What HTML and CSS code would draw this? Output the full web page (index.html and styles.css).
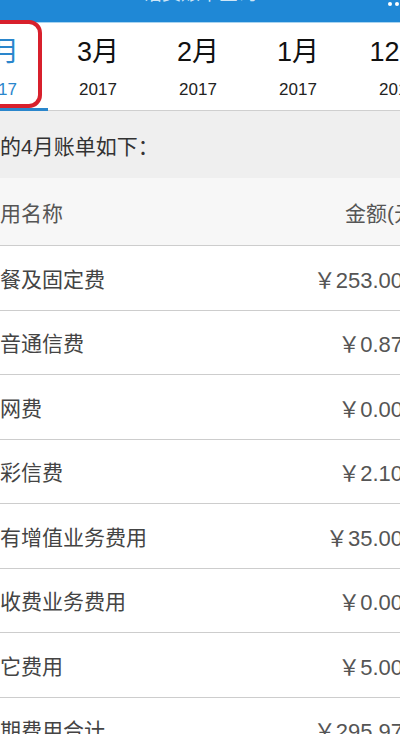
FILE: index.html
```html
<!DOCTYPE html>
<html lang="zh-CN">
<head>
    <meta charset="UTF-8">
    <meta name="viewport" content="width=device-width, initial-scale=1.0">
    <title>话费账单</title>
    <link rel="stylesheet" href="styles.css">
</head>
<body>
    <div class="screen">
        <div class="nav">
            <span class="nav-title">话费账单查询</span>
            <span class="nav-more"><i></i><i></i><i></i></span>
        </div>

        <div class="tabs">
            <div class="tab active"><span class="month">4月</span><span class="year">2017</span></div>
            <div class="tab"><span class="month">3月</span><span class="year">2017</span></div>
            <div class="tab"><span class="month">2月</span><span class="year">2017</span></div>
            <div class="tab"><span class="month">1月</span><span class="year">2017</span></div>
            <div class="tab"><span class="month">12月</span><span class="year">2016</span></div>
        </div>
        <div class="mark"></div>

        <div class="intro">您的4月账单如下：</div>

        <div class="bill">
            <div class="row head"><span>费用名称</span><span class="unit">金额(元)</span></div>
            <div class="row"><span>套餐及固定费</span><span class="amount">￥253.00</span></div>
            <div class="row"><span>语音通信费</span><span class="amount">￥0.87</span></div>
            <div class="row"><span>上网费</span><span class="amount">￥0.00</span></div>
            <div class="row"><span>短彩信费</span><span class="amount">￥2.10</span></div>
            <div class="row"><span>所有增值业务费用</span><span class="amount">￥35.00</span></div>
            <div class="row"><span>代收费业务费用</span><span class="amount">￥0.00</span></div>
            <div class="row"><span>其它费用</span><span class="amount">￥5.00</span></div>
            <div class="row"><span>本期费用合计</span><span class="amount">￥295.97</span></div>
        </div>
    </div>
</body>
</html>
```

FILE: styles.css
```css
* { margin: 0; padding: 0; box-sizing: border-box; }
body { font-family: "Liberation Sans", "Noto Sans CJK SC", sans-serif; background: #fff; }
.screen { position: relative; width: 400px; height: 734px; overflow: hidden; background: #fff; }

.nav { height: 23px; background: #1f88d6; border-bottom: 1px solid #a9d4f0; display: flex; justify-content: center; position: relative; }
.nav-title { color: #cfe6f7; font-size: 19px; line-height: 20px; margin-top: -16px; }
.nav-more { position: absolute; right: -6px; top: 2px; display: flex; gap: 3px; }
.nav-more i { display: block; width: 4px; height: 4px; border-radius: 50%; background: #fff; }

.tabs { display: flex; margin-left: -52px; height: 88px; border-bottom: 1px solid #cfcfcf; }
.tab { flex: 0 0 100px; display: flex; flex-direction: column; align-items: center; position: relative; }
.tab .month { font-size: 27px; line-height: 30px; margin-top: 14px; color: #111; }
.tab .year { font-size: 17px; line-height: 20px; margin-top: 13px; color: #222; }
.tab.active .month, .tab.active .year { color: #2a86cc; }
.tab.active::after { content: ""; position: absolute; left: 0; right: 0; bottom: -1px; height: 3px; background: #2a86cc; }

.mark { position: absolute; left: -20px; top: 20px; width: 62px; height: 88px; border: 4.5px solid #d8202c; border-radius: 13px; }

.intro { height: 67px; background: #efefef; display: flex; align-items: center; margin-left: -21px; font-size: 21px; color: #333; }

.bill { margin: 0 -3px 0 -21px; }
.row { height: 64.5px; display: flex; justify-content: space-between; align-items: center; border-bottom: 1.5px solid #cdcdcd; font-size: 21px; color: #444; background: #fff; }
.row.head { height: 68px; background: #f7f7f7; color: #555; }
.unit { margin-right: -19px; }
.amount { color: #555; font-size: 22px; }
```
